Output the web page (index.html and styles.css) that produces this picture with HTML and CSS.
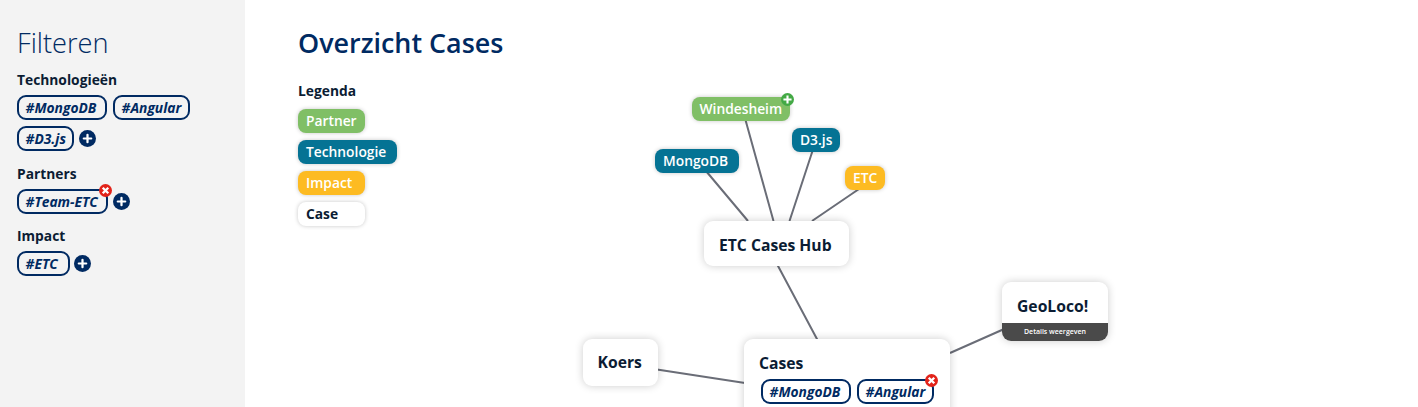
FILE: index.html
```html
<!DOCTYPE html>
<html lang="nl">
<head>
<meta charset="utf-8">
<title>Overzicht Cases</title>
<link rel="stylesheet" href="styles.css">
</head>
<body>
<svg class="defs" width="0" height="0">
  <symbol id="plus" viewBox="0 0 16 16"><circle cx="8" cy="8" r="8" fill="currentColor"/><path d="M8 4.500v7M4.500 8h7" stroke="#fff" stroke-width="2.100" stroke-linecap="round"/></symbol>
  <symbol id="plus-small" viewBox="0 0 16 16"><circle cx="8" cy="8" r="8" fill="currentColor"/><path d="M8 3v10M3 8h10" stroke="#fff" stroke-width="2.600"/></symbol>
  <symbol id="cross" viewBox="0 0 16 16"><circle cx="8" cy="8" r="8" fill="currentColor"/><path d="M4.600 4.600l6.800 6.800M11.400 4.600l-6.800 6.800" stroke="#fff" stroke-width="2.900"/></symbol>
</svg>
<div class="app">
  <aside class="sidebar">
    <h2 class="filter-title">Filteren</h2>
    <section class="group">
      <h3 class="label">Technologieën</h3>
      <div class="tags">
        <span class="tag w-mongo">#MongoDB</span><span class="tag w-angular">#Angular</span>
        <span class="tag w-d3">#D3.js</span><svg class="add"><use href="#plus"/></svg>
      </div>
    </section>
    <section class="group">
      <h3 class="label">Partners</h3>
      <div class="tags">
        <span class="tag w-team">#Team-ETC<svg class="badge remove"><use href="#cross"/></svg></span><svg class="add"><use href="#plus"/></svg>
      </div>
    </section>
    <section class="group">
      <h3 class="label">Impact</h3>
      <div class="tags">
        <span class="tag w-etc">#ETC</span><svg class="add add-near"><use href="#plus"/></svg>
      </div>
    </section>
  </aside>
  <main class="main">
    <h1 class="title">Overzicht Cases</h1>
    <section class="legend">
      <h3 class="label">Legenda</h3>
      <span class="pill partner">Partner</span>
      <span class="pill tech legend-tech">Technologie</span>
      <span class="pill impact">Impact</span>
      <span class="pill case">Case</span>
    </section>
    <div class="graph">
      <svg class="edges" viewBox="0 0 1173 407">
        <path d="M461 171L503 221M500.500 120L528.500 221M567.500 151L544.500 221M614 189L567 221M532.500 265L572.500 340M412 369.500L500 383M705 353L758 329.500"/>
      </svg>
      <span class="pill partner node windesheim">Windesheim<svg class="badge expand"><use href="#plus-small"/></svg></span>
      <span class="pill tech node mongodb">MongoDB</span>
      <span class="pill tech node d3">D3.js</span>
      <span class="pill impact node etc">ETC</span>
      <div class="card node hub">ETC Cases Hub</div>
      <div class="card node koers">Koers</div>
      <div class="card node geoloco"><span class="card-name">GeoLoco!</span><span class="details">Details weergeven</span></div>
      <div class="card node cases">Cases
        <div class="tags">
          <span class="tag w-mongo">#MongoDB</span><span class="tag w-angular">#Angular<svg class="badge remove"><use href="#cross"/></svg></span>
        </div>
      </div>
    </div>
  </main>
</div>
</body>
</html>
```
FILE: styles.css
```css
* { box-sizing: border-box; }
body { margin: 0; font-family: "Open Sans", sans-serif; color: #0b1c33; background: #fff; overflow: hidden; }
h1, h2, h3 { margin: 0; }
.defs { position: absolute; }
.app { display: flex; height: 407px; overflow: hidden; }

.sidebar { width: 245px; flex: none; background: #f3f3f3; padding: 24px 17px; }
.filter-title { font-size: 27.2px; line-height: 38px; font-weight: 300; color: #002a62; }
.group { margin-bottom: 12.5px; }
.filter-title + .group { margin-top: 8px; }
.label { font-size: 13.8px; line-height: 20px; font-weight: 700; }
.tags { display: flex; flex-wrap: wrap; align-items: center; gap: 6px; margin-top: 5px; }
.tag { position: relative; height: 25px; border: 2px solid #002a62; border-radius: 9px; padding-left: 6.500px; font-size: 13.8px; line-height: 21px; font-weight: 700; font-style: italic; color: #002a62; background: transparent; white-space: nowrap; }
.w-mongo { width: 90px; }
.w-angular { width: 77px; }
.w-d3 { width: 57px; }
.w-team { width: 91px; }
.w-etc { width: 53px; }
.add { width: 17px; height: 17px; color: #002a62; margin-left: -1px; }
.add-near { margin-left: -2px; }
.badge { position: absolute; width: 13px; height: 13px; }
.remove { color: #e2231a; top: -7px; right: -6px; }
.expand { color: #43a945; top: -4px; right: -4px; }

.main { flex: 1; position: relative; padding: 24px 53px; }
.title { font-size: 26.9px; line-height: 38px; font-weight: 600; color: #002a62; }
.legend { display: flex; flex-direction: column; align-items: flex-start; gap: 7.2px; margin-top: 19px; }
.legend .label { margin-bottom: .5px; }
.pill { min-width: 67px; height: 24px; border-radius: 8px; padding: 0 8px; font-size: 13.8px; line-height: 24px; font-weight: 600; color: #fff; white-space: nowrap; box-shadow: 0 0 4px rgba(0,0,0,.22); }
.partner { background: #80bf66; }
.tech { background: #057394; }
.impact { background: #fdbb22; }
.case { background: #fff; color: #0b1c33; font-weight: 700; }
.legend-tech { width: 98.500px; }

/* Free graph canvas: nodes and edges sit at their own coordinates. */
.graph { position: absolute; inset: 0; overflow: hidden; pointer-events: none; }
.edges { position: absolute; left: 0; top: 0; width: 1173px; height: 407px; fill: none; stroke: #6a6d77; stroke-width: 2; }
.node { position: absolute; min-width: 0; }
.windesheim { left: 446.500px; top: 97px; width: 98.500px; }
.mongodb { left: 410px; top: 149px; width: 84px; }
.d3 { left: 547px; top: 128px; width: 48px; }
.etc { left: 600px; top: 166px; width: 40px; }
.card { background: #fff; border-radius: 9px; box-shadow: 0 0 8px rgba(0,0,0,.2); font-size: 15.7px; line-height: 22px; font-weight: 700; padding: 13px 15px; white-space: nowrap; }
.hub { left: 459px; top: 221px; width: 145px; height: 45px; }
.koers { left: 338px; top: 339px; width: 75px; height: 47px; padding: 12px 14.500px; }
.geoloco { left: 757px; top: 282px; width: 106px; height: 58.500px; padding: 0; display: flex; flex-direction: column; overflow: hidden; }
.card-name { height: 41px; padding: 13px 15px 0; }
.details { height: 18px; background: #4a4a4a; color: #fff; font-size: 7px; line-height: 18px; font-weight: 600; text-align: center; }
.cases { left: 499px; top: 339px; width: 206px; height: 90px; }
.cases .tags { flex-wrap: nowrap; margin: 5px 0 0 2px; }
```
